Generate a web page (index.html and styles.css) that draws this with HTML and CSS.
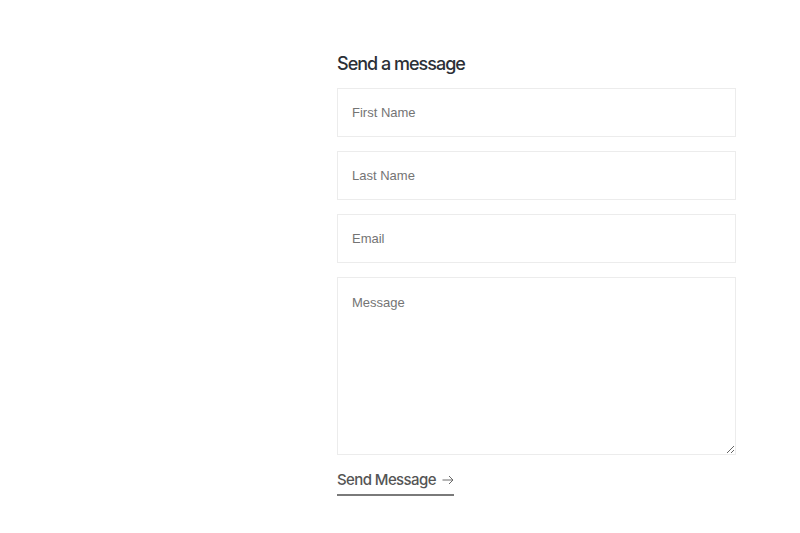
FILE: index.html
```html
<!DOCTYPE html>
<html>
<head>
<meta charset="utf-8">
<link rel="stylesheet" href="styles.css">
</head>
<body>
<div class="page">
  <div class="spacer"></div>
  <form class="form">
    <h2 class="title">Send a message</h2>
    <input class="field" type="text" placeholder="First Name">
    <input class="field" type="text" placeholder="Last Name">
    <input class="field" type="email" placeholder="Email">
    <textarea class="field area" placeholder="Message"></textarea>
    <div class="actions">
      <button class="send" type="button">Send Message<svg class="arrow" width="12" height="10" viewBox="0 0 12 10"><path d="M0.5 5H11M7 1l4 4-4 4" fill="none" stroke="#6a6a6a" stroke-width="1"/></svg></button>
    </div>
  </form>
</div>
</body>
</html>
```
FILE: styles.css
```css
html, body {
  margin: 0;
  padding: 0;
  background: #fff;
}
.page {
  display: flex;
  padding-top: 52px;
}
.spacer {
  width: 337px;
  flex: none;
}
.form {
  width: 399px;
  display: flex;
  flex-direction: column;
  gap: 14px;
}
.title {
  margin: 0 0 -2px;
  font-family: Inter, "Liberation Sans", sans-serif;
  font-weight: 500;
  font-size: 18px;
  line-height: 24px;
  letter-spacing: -1px;
  color: #2b2f36;
}
.field {
  box-sizing: border-box;
  width: 399px;
  height: 49px;
  margin: 0;
  border: 1px solid #ececec;
  border-radius: 0;
  padding: 0 14px;
  font-family: "Liberation Sans", Arial, sans-serif;
  font-size: 13px;
  color: #333;
  background: #fff;
  outline: none;
}
.field::placeholder {
  color: #747474;
}
.area {
  height: 178px;
  padding: 17px 14px;
  line-height: 16px;
  resize: vertical;
}
.actions {
  display: flex;
}
.send {
  display: flex;
  align-items: center;
  margin: 0;
  padding: 1px 0 4px;
  border: none;
  border-bottom: 2px solid #7a7a7a;
  background: none;
  font-family: Inter, "Liberation Sans", sans-serif;
  font-weight: 500;
  font-size: 15px;
  line-height: 20px;
  letter-spacing: -0.6px;
  color: #555;
  cursor: pointer;
}
.arrow {
  margin-left: 6px;
}
```
